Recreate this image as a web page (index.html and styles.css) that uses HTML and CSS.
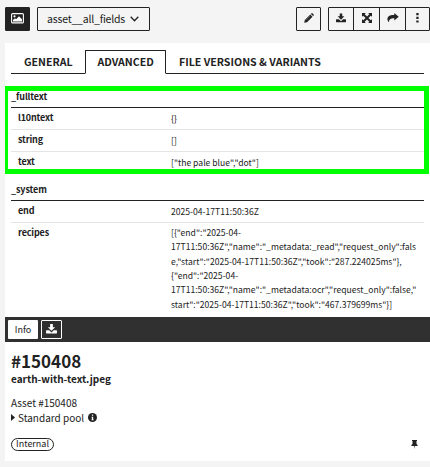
FILE: index.html
```html
<!DOCTYPE html>
<html lang="en">
<head>
<meta charset="utf-8">
<title>Asset detail</title>
<link rel="stylesheet" href="styles.css">
</head>
<body>
<svg width="0" height="0" class="defs">
  <symbol id="download" viewBox="0 0 24 22"><path d="M9 0h6v7h5l-8 8-8-8h5z"/><path d="M1 14h6l5 4.500 5-4.500h6q1 0 1 1v5q0 1-1 1H1q-1 0-1-1v-5q0-1 1-1z"/></symbol>
</svg>
<header class="toolbar">
  <button class="btn dark"><svg width="13" height="11" viewBox="0 0 13 11"><rect x=".6" y=".6" width="11.800" height="9.300" rx="1" fill="none" stroke="#fff" stroke-width="1.100"/><circle cx="3.500" cy="3.300" r="1.100" fill="#fff"/><path d="M2 8.500V7l2-1.700 1.100 1L8 3.200l3 3v2.300z" fill="#fff"/></svg></button>
  <button class="btn select"><span>asset__all_fields</span><svg width="9" height="6" viewBox="0 0 9 6"><path d="M.7.8 4.500 4.700 8.300.8" fill="none" stroke="#222" stroke-width="1.300"/></svg></button>
  <button class="btn edit"><svg width="10" height="10" viewBox="0 0 10 10"><path d="M.2 9.800.8 7 6.300 1.500l2.200 2.200L3 9.200z"/><path d="M6.900.9 7.400.4q.6-.6 1.200 0l1 1q.6.6 0 1.200l-.5.5z"/><path d="m1.900 7.300 4.500-4.500" stroke="#999" stroke-width=".5"/></svg></button>
  <div class="group">
    <button><svg width="10" height="10"><use href="#download"/></svg></button>
    <button><svg width="10" height="10" viewBox="0 0 10 10"><path d="M0 0h3.800L2.700 1.200 5 3.600l2.300-2.400L6.200 0H10v3.800L8.800 2.700 6.400 5l2.400 2.300L10 6.200V10H6.200l1.100-1.200L5 6.400 2.700 8.800 3.800 10H0V6.200l1.200 1.100L3.600 5 1.200 2.700 0 3.800z"/></svg></button>
    <button><svg width="12" height="10" viewBox="0 0 12 10"><path d="M7.300 0 11.700 3.800 7.300 7.500V5.300C4 5.100 2 6 1.900 9.300 0 7.500 0 5 1.400 3.500 2.700 2.200 4.700 2.100 7.300 2.100z"/></svg></button>
    <button><svg width="3" height="10" viewBox="0 0 3 10"><path d="M.3 0h2.300v2.200H.3zM.3 3.700h2.300v2.200H.3zM.3 7.400h2.300v2.200H.3z"/></svg></button>
  </div>
</header>
<main class="panel">
  <nav class="tabs">
    <a class="tab general">GENERAL</a>
    <a class="tab active">ADVANCED</a>
    <a class="tab files">FILE VERSIONS &amp; VARIANTS</a>
  </nav>
  <div class="fields">
    <section class="highlight">
      <h3>_fulltext</h3>
      <dl><dt>l10ntext</dt><dd>{}</dd></dl>
      <dl><dt>string</dt><dd>[]</dd></dl>
      <dl class="last"><dt>text</dt><dd>["the pale blue","dot"]</dd></dl>
    </section>
    <section class="system">
      <h3>_system</h3>
      <dl><dt>end</dt><dd>2025-04-17T11:50:36Z</dd></dl>
      <dl class="last"><dt>recipes</dt><dd class="recipes">[{"end":"2025-04-<br>17T11:50:36Z","name":"_metadata:_read","request_only":fals<br>e,"start":"2025-04-17T11:50:36Z","took":"287.224025ms"},<br>{"end":"2025-04-<br>17T11:50:36Z","name":"_metadata:ocr","request_only":false,"<br>start":"2025-04-17T11:50:36Z","took":"467.379699ms"}]</dd></dl>
    </section>
  </div>
  <div class="bar">
    <button class="info">Info</button>
    <button class="download"><svg width="11" height="10"><use href="#download"/></svg></button>
  </div>
  <section class="summary">
    <h1>#150408</h1>
    <h2>earth-with-text.jpeg</h2>
    <p class="asset">Asset #150408</p>
    <p class="pool"><svg width="4" height="7" viewBox="0 0 4 7"><path d="M0 0 4 3.500 0 7z"/></svg><span>Standard pool</span><svg class="hint" width="9" height="9" viewBox="0 0 9 9"><circle cx="4.500" cy="4.500" r="4.500"/><path d="M3.900 1.500h1.300v1.200H3.900zM3.500 3.700h1.700v2.700h.5v.8H3.400v-.8h.5V4.500h-.4z" fill="#fff"/></svg></p>
    <div class="foot"><span class="tag">Internal</span><svg width="7" height="9" viewBox="0 0 7 9"><path d="M1 0h5v1H5.500v3Q6.700 4.700 6.700 6H4l-.4 3L3.200 6H.3Q.3 4.700 1.500 4V1H1z"/></svg></div>
  </section>
</main>
</body>
</html>
```
FILE: styles.css
```css
* { box-sizing: border-box; }
body { margin: 0; height: 467px; overflow: hidden; background: #f4f4f4; color: #222; font-family: "Noto Sans CJK SC", sans-serif; font-size: 10px; }
.defs { position: absolute; }
svg { display: block; flex: none; fill: #222; }
button { display: flex; align-items: center; justify-content: center; padding: 0; margin: 0; font: inherit; color: #222; background: none; border: 0; }
h1, h2, h3, p, dl, dd { margin: 0; white-space: nowrap; }
.toolbar { display: flex; height: 43px; padding: 7px 0 0 5px; }
.btn { width: 25px; height: 24px; border: 1px solid #222; border-radius: 1px; padding-bottom: 2px; }
.dark { background: #222; }
.select { width: 113px; margin-left: 7px; padding: 0 10px 0 9px; justify-content: space-between; font-size: 10.500px; letter-spacing: -.2px; line-height: 22px; }
.edit { margin-left: auto; }
.group { display: flex; width: 102px; height: 24px; margin-left: 7px; border: 1px solid #222; border-radius: 1px; }
.group button { width: 26px; padding-bottom: 2px; }
.group button:first-child { width: 24px; }
.group button:last-child { width: 24px; }
.group button + button { border-left: 1px solid #222; }
.panel { margin-left: 5px; height: 418px; background: #fff; }
.tabs { display: flex; height: 31px; margin: 0 6px; padding-top: 7px; }
.tab { height: 24px; border-bottom: 1px solid #222; font-size: 10.600px; line-height: 23px; font-weight: 700; white-space: nowrap; }
.general { width: 74px; padding-left: 13px; }
.active { width: 81px; padding-left: 11.500px; border: 1px solid #222; border-bottom-color: #fff; border-radius: 1px 1px 0 0; line-height: 21px; }
.files { flex: 1; padding-left: 13px; }
.fields { height: 243px; padding-top: 12px; overflow: hidden; }
.highlight { width: 426px; height: 88px; margin-left: -2px; padding: 0 0 0 3px; border: 5px solid #00ff00; }
h3 { width: 413px; border-bottom: 1px solid #222; font-size: 9px; letter-spacing: -.1px; font-weight: 700; }
.highlight h3 { height: 17px; line-height: 12px; }
dl { display: flex; width: 413px; height: 22px; padding-left: 7px; line-height: 20px; border-bottom: 1px solid #e4e4e4; }
dt { flex: none; width: 153px; font-size: 9px; letter-spacing: -.15px; font-weight: 700; }
dd { font-size: 8.600px; line-height: 21px; }
.last { border: 0; line-height: 19px; }
.last dd { line-height: 20px; }
.system { padding: 5px 0 0 6px; }
.system h3 { height: 22px; line-height: 21px; }
.system .recipes { line-height: 14.350px; padding-top: 2px; }
.bar { display: flex; gap: 3px; height: 25px; padding: 3px; background: #303030; }
.info { width: 30px; height: 19px; border-radius: 1px; background: #fff; font-size: 9px; line-height: 17px; padding-bottom: 1px; }
.download { width: 21px; height: 19px; border: 1px solid #fff; border-radius: 1px; padding-bottom: 2px; }
.download svg { fill: #fff; }
.summary { padding: 8px 6px 0; }
h1 { height: 23px; font-size: 17px; line-height: 22px; }
h2 { height: 17px; font-size: 10px; line-height: 12px; }
.asset { margin-top: 5px; font-size: 10px; line-height: 15px; }
.pool { display: flex; align-items: center; font-size: 10px; height: 15px; line-height: 15px; }
.pool span { margin-left: 3px; }
.hint { margin-left: 4px; }
.foot { display: flex; align-items: center; justify-content: space-between; margin-top: 13px; padding-right: 6px; }
.tag { width: 43px; height: 13px; border: 1px solid #222; border-radius: 7px; text-align: center; font-size: 9px; line-height: 10px; }
```
